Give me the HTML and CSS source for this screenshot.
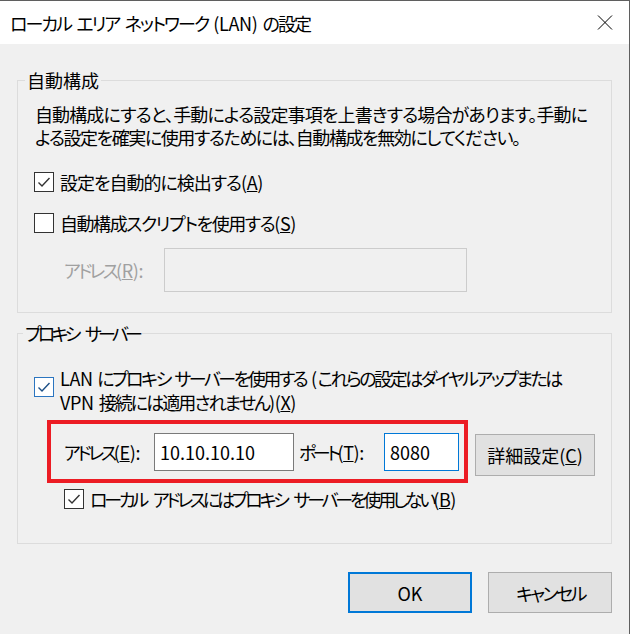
FILE: index.html
```html
<!DOCTYPE html>
<html lang="ja">
<head>
<meta charset="utf-8">
<title>ローカル エリア ネットワーク (LAN) の設定</title>
<link rel="stylesheet" href="styles.css">
</head>
<body>
<div class="window">
  <div class="titlebar">
    <span class="fit title">ローカル エリア ネットワーク <span class="lat">(LAN)</span> の設定</span>
    <svg class="close" width="16" height="15" viewBox="0 0 16 15"><path d="M1 0.5L15 14.5M15 0.5L1 14.5" stroke="#000" stroke-width="1" fill="none"/></svg>
  </div>
  <div class="content">
    <fieldset class="group group-auto">
      <legend>自動構成</legend>
      <p class="desc">
        <span class="fit line p1">自動構成にすると、手動による設定事項を上書きする場合があります。手動に</span>
        <span class="fit line p2">よる設定を確実に使用するためには、自動構成を無効にしてください。</span>
      </p>
      <div class="check-row row-detect">
        <span class="box"><svg width="18" height="18" viewBox="0 0 18 18"><path d="M3.5 9.5L7 13L14.5 5" stroke="#333" stroke-width="1.4" fill="none"/></svg></span>
        <span class="fit c1">設定を自動的に検出する<span class="lat">(<u>A</u>)</span></span>
      </div>
      <div class="check-row row-script">
        <span class="box"></span>
        <span class="fit c2">自動構成スクリプトを使用する<span class="lat">(<u>S</u>)</span></span>
      </div>
      <div class="addr-row">
        <span class="addr-label disabled"><span class="fit lr">アドレス<span class="lat">(<u>R</u>):</span></span></span>
        <input class="field field-disabled" type="text" value="" disabled>
      </div>
    </fieldset>

    <fieldset class="group group-proxy">
      <legend class="legend-proxy"><span class="fit lg2">プロキシ サーバー</span></legend>
      <div class="lan-row">
        <span class="box box-blue"><svg width="18" height="18" viewBox="0 0 18 18"><path d="M3.5 9.5L7 13L14.5 5" stroke="#1c4f86" stroke-width="1.4" fill="none"/></svg></span>
        <span class="lan-label">
          <span class="fit line lan1"><span class="lat">LAN</span> にプロキシ サーバーを使用する <span class="lat">(</span>これらの設定はダイヤルアップまたは</span>
          <span class="fit line lan2"><span class="lat">VPN</span> 接続には適用されません<span class="lat">)(<u>X</u>)</span></span>
        </span>
      </div>
      <div class="proxy-row">
        <div class="highlight">
          <span class="proxy-label"><span class="fit le">アドレス<span class="lat">(<u>E</u>):</span></span></span>
          <input class="field field-addr" type="text" value="10.10.10.10">
          <span class="port-label"><span class="fit lt">ポート<span class="lat">(<u>T</u>):</span></span></span>
          <input class="field field-port" type="text" value="8080">
        </div>
        <button class="btn btn-adv" type="button">詳細設定<span class="lat">(<u>C</u>)</span></button>
      </div>
      <div class="check-row row-local">
        <span class="box"><svg width="18" height="18" viewBox="0 0 18 18"><path d="M3.5 9.5L7 13L14.5 5" stroke="#333" stroke-width="1.4" fill="none"/></svg></span>
        <span class="fit lb">ローカル アドレスにはプロキシ サーバーを使用しない<span class="lat">(<u>B</u>)</span></span>
      </div>
    </fieldset>

    <div class="actions">
      <button class="btn btn-ok" type="button">OK</button>
      <button class="btn btn-cancel" type="button"><span class="fit lc">キャンセル</span></button>
    </div>
  </div>
</div>
</body>
</html>
```

FILE: styles.css
```css
* { box-sizing: border-box; }

html, body {
  margin: 0;
  padding: 0;
}

body {
  width: 630px;
  height: 634px;
  overflow: hidden;
  background: #f0f0f0;
  font-family: "Noto Sans CJK JP", "Noto Sans", sans-serif;
  font-size: 18px;
  color: #000;
  font-feature-settings: "palt";
}

/* text fitted to the original line widths */
.fit {
  display: inline-block;
  white-space: nowrap;
  text-align: justify;
  text-align-last: justify;
  text-justify: inter-character;
  word-spacing: 3px;
}

.fit .lat { letter-spacing: -0.4px; word-spacing: 0; }

.line { display: block; }

.title { width: 300px; letter-spacing: -2px; }
.p1 { width: 550px; letter-spacing: -3px; }
.p2 { width: 483px; letter-spacing: -3px; }
.c1 { width: 203px; letter-spacing: -2.5px; }
.c2 { width: 236px; letter-spacing: -3px; }
.lr { width: 79px; letter-spacing: -3.5px; }
.lg2 { width: 114px; letter-spacing: -3.8px; word-spacing: 7px; }
.lan1 { width: 500px; letter-spacing: -3.3px; word-spacing: 3px; }
.lan2 { width: 236px; letter-spacing: -2.5px; word-spacing: 3px; }
.le { width: 76px; letter-spacing: -3.5px; }
.lt { width: 62px; letter-spacing: -3.5px; }
.lb { width: 366px; letter-spacing: -3.8px; word-spacing: 6px; }
.lc { width: 68px; letter-spacing: -3.5px; }

.window {
  width: 630px;
  height: 634px;
  border-top: 1px solid #5f5f5f;
  border-right: 1px solid #5f5f5f;
  background: #f0f0f0;
}

.titlebar {
  height: 43px;
  background: #fff;
  display: flex;
  align-items: center;
  justify-content: space-between;
  padding: 0 16px 0 10px;
  line-height: 24px;
}

.close { display: block; }

.content {
  padding: 0 17px;
}

.group {
  margin: 0;
  padding: 0 16px 20px 16px;
  border: 1px solid #dcdcdc;
  min-inline-size: auto;
}

.group-auto { margin-top: 24px; }
.group-proxy { margin-top: 8px; padding-bottom: 34px; }

legend {
  margin-left: -9px;
  padding: 0 2px;
  line-height: 24px;
  white-space: nowrap;
}

.legend-proxy { margin-left: -11px; }

.desc {
  margin: 11px 0 0;
  padding-left: 1px;
  line-height: 23px;
}

.check-row {
  display: flex;
  align-items: center;
  height: 20px;
  line-height: 24px;
}

.row-detect { margin-top: 23px; }
.row-script { margin-top: 21px; }
.row-local { margin-top: 6px; margin-left: 30px; }

.box {
  flex: none;
  width: 20px;
  height: 20px;
  border: 1px solid #333;
  background: #fff;
  margin-right: 6px;
  display: flex;
}

.box svg { display: block; }

.box-blue {
  border-color: #2b75c0;
  margin-top: 11px;
}

.addr-row {
  display: flex;
  align-items: center;
  margin-top: 15px;
  padding-left: 30px;
}

.addr-label {
  width: 100px;
  flex: none;
}

.disabled { color: #a0a0a0; }

.field {
  font: inherit;
  font-feature-settings: "palt";
  color: #000;
  margin: 0;
  padding: 0 5px;
  outline: none;
  background: #fff;
}

.field-disabled {
  width: 303px;
  height: 44px;
  border: 1px solid #cccccc;
  background: #f0f0f0;
}

.lan-row {
  display: flex;
  align-items: flex-start;
  margin-top: 21px;
}

.lan-label {
  line-height: 24px;
}

.proxy-row {
  display: flex;
  align-items: flex-start;
  margin-top: 6px;
}

.highlight {
  display: flex;
  align-items: center;
  margin-left: 13px;
  border: 4px solid #ec1c24;
  padding: 9px 5px 8px 12px;
}

.proxy-label { width: 91px; flex: none; padding-left: 1px; }

.field-addr {
  width: 140px;
  height: 38px;
  border: 1px solid #7a7a7a;
}

.port-label {
  width: 85px;
  flex: none;
  margin-left: 5px;
}

.field-port {
  width: 75px;
  height: 38px;
  border: 1px solid #0078d7;
}

.btn {
  font: inherit;
  font-feature-settings: "palt";
  color: #000;
  background: #e1e1e1;
  border: 1px solid #adadad;
  margin: 0;
  padding: 0;
  line-height: 24px;
}

.btn-adv {
  width: 123px;
  height: 42px;
  margin-left: 7px;
  margin-top: 14px;
}

.actions {
  display: flex;
  justify-content: flex-end;
  gap: 16px;
  margin-top: 28px;
}

.btn-ok {
  width: 124px;
  height: 41px;
  border: 2px solid #0078d7;
}

.btn-cancel {
  width: 124px;
  height: 41px;
}
```
